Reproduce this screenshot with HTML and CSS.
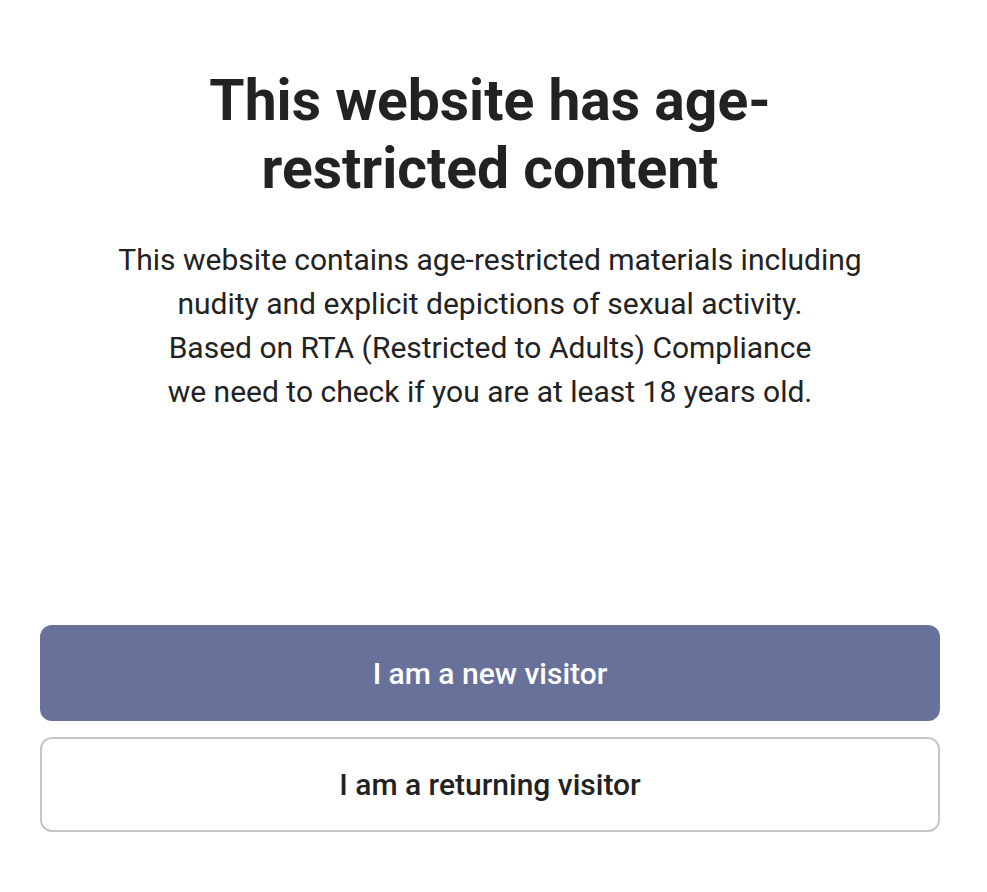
FILE: index.html
```html
<!DOCTYPE html>
<html lang="en">
<head>
    <meta charset="UTF-8">
    <meta name="viewport" content="width=device-width, initial-scale=1.0">
    <title>Age verification</title>
    <link rel="stylesheet" href="styles.css">
</head>
<body>

    <div class="container">
        <h1 class="title">This website has age-restricted content</h1>
        <p class="notice">
            This website contains age-restricted materials including<br>
            nudity and explicit depictions of sexual activity.<br>
            Based on RTA (Restricted to Adults) Compliance<br>
            we need to check if you are at least 18 years old.
        </p>
        <div class="actions">
            <button class="btn btn-primary">I am a new visitor</button>
            <button class="btn btn-outline">I am a returning visitor</button>
        </div>
    </div>

</body>
</html>
```

FILE: styles.css
```css
* { margin: 0; padding: 0; box-sizing: border-box; }
body {
    background-color: #fff;
    color: #222;
    font-family: Roboto, "Liberation Sans", sans-serif;
}
.container {
    width: 100%;
    padding: 67px 47px 0 40px;
    display: flex;
    flex-direction: column;
    align-items: center;
}
.title {
    max-width: 640px;
    text-align: center;
    font-size: 57px;
    line-height: 68px;
    font-weight: 700;
    color: #222;
}
.notice {
    margin-top: 35px;
    text-align: center;
    font-size: 30px;
    line-height: 44px;
    color: #222;
}
.actions {
    width: 100%;
    margin-top: 211px;
    display: flex;
    flex-direction: column;
    gap: 16px;
}
.btn {
    width: 100%;
    height: 96px;
    border-radius: 12px;
    font-family: inherit;
    font-size: 30px;
    font-weight: 500;
    cursor: pointer;
}
.btn-primary {
    background-color: #67719a;
    border: none;
    color: #fff;
}
.btn-outline {
    height: 95px;
    background-color: #fff;
    border: 2px solid #c6c6c6;
    color: #222;
}
```
